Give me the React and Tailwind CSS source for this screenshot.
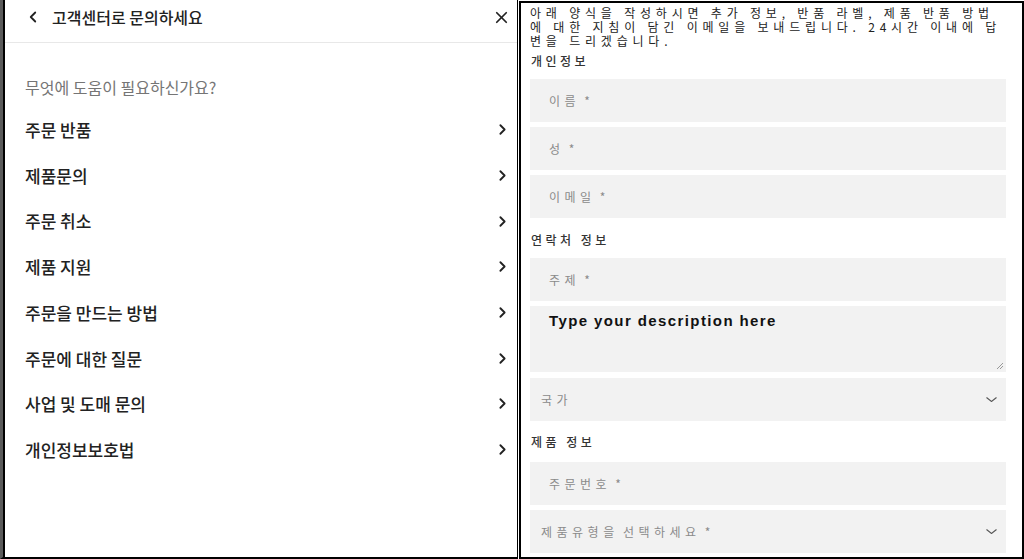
import { ChevronLeft, ChevronRight, X } from 'lucide-react';

const kr = '"Noto Sans CJK KR", "Noto Sans", sans-serif';

const topics = [
  '주문 반품',
  '제품문의',
  '주문 취소',
  '제품 지원',
  '주문을 만드는 방법',
  '주문에 대한 질문',
  '사업 및 도매 문의',
  '개인정보보호법',
];

function SectionLabel({ children, className = '' }) {
  return (
    <div className={`h-[14px] text-[12px] leading-[14px] font-medium tracking-[3.5px] text-[#333] pl-px ${className}`}>
      {children}
    </div>
  );
}

function Field({ label, className = '' }) {
  return (
    <div className={`h-[43px] w-[476px] bg-[#f2f2f2] flex items-center pl-[19px] text-[12px] tracking-[4.5px] [word-spacing:-3px] text-[#8a8a8a] ${className}`}>
      {label}
    </div>
  );
}

function SelectField({ label, className = '' }) {
  return (
    <div className={`h-[43px] w-[476px] bg-[#f2f2f2] flex items-center justify-between pl-[11px] pr-[9px] text-[12px] tracking-[4.5px] [word-spacing:-3px] text-[#8a8a8a] ${className}`}>
      <span>{label}</span>
      <svg width="11" height="5" viewBox="0 0 11 5" fill="none" stroke="#555" strokeWidth="1.1">
        <path d="M0.5 0.5l5 4 5-4" />
      </svg>
    </div>
  );
}

export default function App() {
  return (
    <div className="w-[1024px] h-[559px] flex bg-white overflow-hidden" style={{ fontFamily: kr }}>
      {/* left: topic list */}
      <div className="w-[518px] h-full border-l-[3px] border-l-[#5a5a5a] border-b-2 border-b-black">
        <div className="h-full border-l-2 border-l-black border-r border-r-black">
          <div className="h-[42px] flex items-center justify-between pb-[8px] pl-[19px] pr-[6px]">
            <div className="flex items-center gap-[10px]">
              <ChevronLeft size={18} strokeWidth={2.4} className="text-[#222]" />
              <span className="text-[16px] font-medium text-[#222]">고객센터로 문의하세요</span>
            </div>
            <X size={19} strokeWidth={2.2} className="text-[#222]" />
          </div>
          <div className="h-px bg-[#e8e8e8]" />
          <div className="mt-[33px] pl-[20px] text-[16px] leading-[22px] text-[#757575]">
            무엇에 도움이 필요하신가요?
          </div>
          <div className="mt-[9px]">
            {topics.map((t) => (
              <div key={t} className="h-[45.7px] flex items-center justify-between pl-[20px] pr-[6px]">
                <span className="text-[17px] font-medium text-[#222]">{t}</span>
                <ChevronRight size={17} strokeWidth={2.6} className="text-[#222]" />
              </div>
            ))}
          </div>
        </div>
      </div>

      {/* right: contact form */}
      <div className="ml-px mt-px w-[505px] h-[558px] border-2 border-black pl-[9px]">
        <div className="pt-[3px] text-[12px] leading-[14px] tracking-[4.8px] text-[#222] whitespace-nowrap">
          <div>아래 양식을 작성하시면 추가 정보, 반품 라벨, 제품 반품 방법</div>
          <div>에 대한 지침이 담긴 이메일을 보내드립니다. 24시간 이내에 답</div>
          <div>변을 드리겠습니다.</div>
        </div>

        <SectionLabel className="mt-[6px]">개인정보</SectionLabel>
        <Field label="이름 *" className="mt-[11px]" />
        <Field label="성 *" className="mt-[5px]" />
        <Field label="이메일 *" className="mt-[5px]" />

        <SectionLabel className="mt-[15px]">연락처 정보</SectionLabel>
        <Field label="주제 *" className="mt-[11px]" />
        <div className="relative mt-[5px] h-[66px] w-[476px] bg-[#f2f2f2] pl-[19px] pt-[1px]">
          <span
            className="text-[15px] font-semibold tracking-[1.4px] text-[#111]"
            style={{ fontFamily: '"Liberation Sans", Arial, sans-serif' }}
          >
            Type your description here
          </span>
          <svg className="absolute right-[2px] bottom-[2px]" width="8" height="8" viewBox="0 0 8 8" stroke="#999" strokeWidth="1">
            <path d="M1 7L7 1M4 7L7 4" />
          </svg>
        </div>
        <SelectField label="국가" className="mt-[6px]" />

        <SectionLabel className="mt-[14px]">제품 정보</SectionLabel>
        <Field label="주문번호 *" className="mt-[13px]" />
        <SelectField label="제품유형을 선택하세요 *" className="mt-[5px]" />
      </div>
    </div>
  );
}
